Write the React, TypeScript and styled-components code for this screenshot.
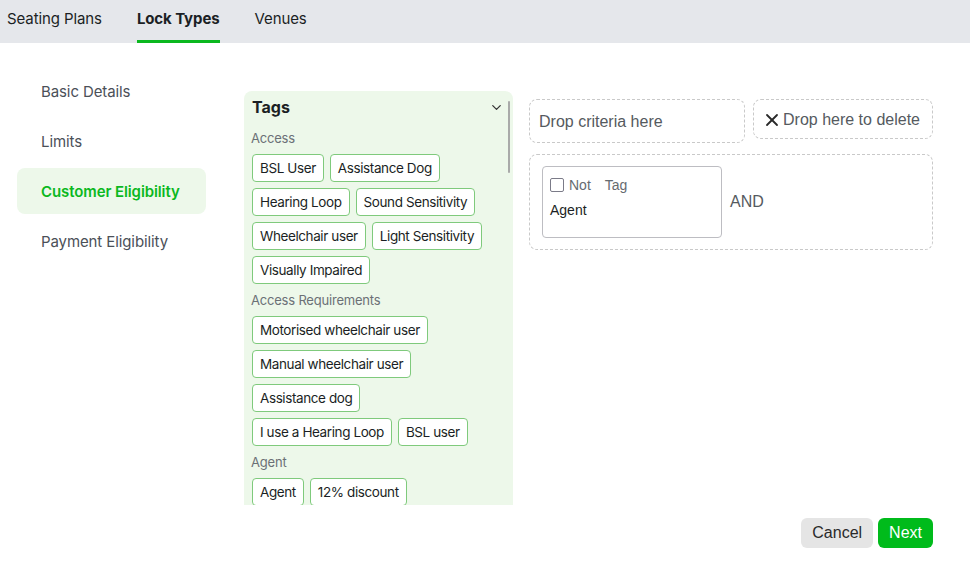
import React from "react";
import styled, { createGlobalStyle } from "styled-components";
import { ChevronDown, X } from "lucide-react";

const GlobalStyle = createGlobalStyle`
  * {
    box-sizing: border-box;
  }
  body {
    margin: 0;
    background: #ffffff;
    font-family: Inter, "Noto Sans", sans-serif;
    color: #1f2328;
  }
`;

const Page = styled.div`
  width: 970px;
  height: 571px;
  overflow: hidden;
`;

const TopNav = styled.nav`
  display: flex;
  align-items: stretch;
  gap: 35px;
  height: 43px;
  padding-left: 7px;
  background: #e5e7eb;
`;

const NavTab = styled.div<{ $active?: boolean }>`
  display: flex;
  align-items: center;
  padding-bottom: 3px;
  font-size: 15px;
  letter-spacing: -0.1px;
  font-weight: ${(p) => (p.$active ? 700 : 400)};
  color: #1b1f24;
  border-bottom: 3px solid ${(p) => (p.$active ? "#0bb81f" : "transparent")};
`;

const Main = styled.div`
  display: flex;
  align-items: flex-start;
  height: 462px;
`;

const Sidebar = styled.ul`
  list-style: none;
  margin: 25px 0 0 17px;
  padding: 0;
  width: 189px;
  display: flex;
  flex-direction: column;
  gap: 4px;
`;

const SideItem = styled.li<{ $active?: boolean }>`
  height: 46px;
  display: flex;
  align-items: center;
  padding-left: 24px;
  border-radius: 8px;
  font-size: 15px;
  letter-spacing: -0.1px;
  font-weight: ${(p) => (p.$active ? 600 : 400)};
  color: ${(p) => (p.$active ? "#0bb81f" : "#4b5058")};
  background: ${(p) => (p.$active ? "#edf8ea" : "transparent")};
`;

const TagsPanel = styled.section`
  position: relative;
  margin: 48px 0 0 38px;
  width: 269px;
  height: 414px;
  background: #edf8ea;
  border-radius: 8px 8px 0 0;
  overflow: hidden;
`;

const TagsScroll = styled.div`
  height: 100%;
  overflow: hidden;
  padding: 6px 10px 0 7px;
`;

const PanelHeader = styled.div`
  display: flex;
  align-items: center;
  justify-content: space-between;
  height: 20px;
  padding-left: 1px;
  margin-bottom: 12px;
  font-size: 16px;
  font-weight: 700;
  color: #1b1f24;
  svg {
    margin-right: -1px;
    color: #333;
  }
`;

const FakeScrollThumb = styled.div`
  position: absolute;
  top: 10px;
  right: 3px;
  width: 2px;
  height: 72px;
  background: #a9aaa9;
  border-radius: 1px;
`;

const GroupLabel = styled.div`
  font-size: 13px;
  line-height: 18px;
  letter-spacing: -0.2px;
  color: #6b7076;
  margin: 7px 0 7px;
`;

const TagWrap = styled.div`
  display: flex;
  flex-wrap: wrap;
  gap: 6px;
  padding-left: 1px;
`;

const Tag = styled.span`
  display: inline-flex;
  align-items: center;
  height: 28px;
  padding: 0 7px;
  background: #ffffff;
  border: 1px solid #7fca7c;
  border-radius: 4px;
  font-size: 13.5px;
  letter-spacing: -0.4px;
  color: #1b1f24;
  white-space: nowrap;
`;

const Builder = styled.div`
  margin: 56px 0 0 16px;
  width: 404px;
  display: flex;
  flex-direction: column;
  gap: 11px;
  font-family: "Liberation Sans", Arial, sans-serif;
`;

const DropRow = styled.div`
  display: flex;
  align-items: flex-start;
  gap: 8px;
`;

const DropZone = styled.div<{ $w: number; $h: number }>`
  width: ${(p) => p.$w}px;
  height: ${(p) => p.$h}px;
  display: flex;
  align-items: center;
  gap: 1px;
  padding: 2px 9px 0;
  border: 1px dashed #c9c9c9;
  border-radius: 8px;
  font-size: 16px;
  color: #555a60;
  svg {
    color: #2a2a2a;
    flex-shrink: 0;
    margin-left: -1px;
  }
`;

const Group = styled.div`
  height: 96px;
  display: flex;
  align-items: center;
  gap: 8px;
  padding: 0 12px;
  border: 1px dashed #c9c9c9;
  border-radius: 8px;
`;

const CriteriaCard = styled.div`
  width: 180px;
  height: 72px;
  padding: 10px 7px;
  border: 1px solid #bdbdc2;
  border-radius: 4px;
  background: #ffffff;
  display: flex;
  flex-direction: column;
  gap: 9px;
`;

const CardTop = styled.div`
  display: flex;
  align-items: center;
  font-size: 14px;
  color: #666b70;
`;

const Check = styled.span`
  width: 14px;
  height: 14px;
  border: 1px solid #7b7b88;
  border-radius: 2px;
  margin-right: 5px;
`;

const NotLabel = styled.span`
  margin-right: 14px;
`;

const CardValue = styled.div`
  font-size: 14px;
  color: #1b1f24;
`;

const Joiner = styled.span`
  font-size: 16px;
  color: #555a60;
`;

const Footer = styled.footer`
  display: flex;
  justify-content: flex-end;
  gap: 5px;
  padding: 13px 37px 0 0;
  font-family: "Liberation Sans", Arial, sans-serif;
`;

const Button = styled.button<{ $primary?: boolean }>`
  height: 30px;
  padding: 0 11px;
  border: none;
  border-radius: 6px;
  font-family: inherit;
  font-size: 16px;
  background: ${(p) => (p.$primary ? "#00bb1b" : "#e5e5e5")};
  color: ${(p) => (p.$primary ? "#ffffff" : "#2a2a2a")};
`;

const groups = [
  {
    label: "Access",
    tags: [
      "BSL User",
      "Assistance Dog",
      "Hearing Loop",
      "Sound Sensitivity",
      "Wheelchair user",
      "Light Sensitivity",
      "Visually Impaired",
    ],
  },
  {
    label: "Access Requirements",
    tags: [
      "Motorised wheelchair user",
      "Manual wheelchair user",
      "Assistance dog",
      "I use a Hearing Loop",
      "BSL user",
    ],
  },
  {
    label: "Agent",
    tags: ["Agent", "12% discount"],
  },
];

const sideItems = [
  "Basic Details",
  "Limits",
  "Customer Eligibility",
  "Payment Eligibility",
];

const App = () => {
  return (
    <Page>
      <GlobalStyle />
      <TopNav>
        <NavTab>Seating Plans</NavTab>
        <NavTab $active>Lock Types</NavTab>
        <NavTab>Venues</NavTab>
      </TopNav>
      <Main>
        <Sidebar>
          {sideItems.map((item) => (
            <SideItem key={item} $active={item === "Customer Eligibility"}>
              {item}
            </SideItem>
          ))}
        </Sidebar>
        <TagsPanel>
          <TagsScroll>
            <PanelHeader>
              Tags
              <ChevronDown size={15} strokeWidth={2} />
            </PanelHeader>
            {groups.map((g) => (
              <div key={g.label}>
                <GroupLabel>{g.label}</GroupLabel>
                <TagWrap>
                  {g.tags.map((t) => (
                    <Tag key={t}>{t}</Tag>
                  ))}
                </TagWrap>
              </div>
            ))}
          </TagsScroll>
          <FakeScrollThumb />
        </TagsPanel>
        <Builder>
          <DropRow>
            <DropZone $w={216} $h={44}>Drop criteria here</DropZone>
            <DropZone $w={180} $h={40}>
              <X size={20} strokeWidth={2.2} />
              Drop here to delete
            </DropZone>
          </DropRow>
          <Group>
            <CriteriaCard>
              <CardTop>
                <Check />
                <NotLabel>Not</NotLabel>
                Tag
              </CardTop>
              <CardValue>Agent</CardValue>
            </CriteriaCard>
            <Joiner>AND</Joiner>
          </Group>
        </Builder>
      </Main>
      <Footer>
        <Button>Cancel</Button>
        <Button $primary>Next</Button>
      </Footer>
    </Page>
  );
};

export default App;
